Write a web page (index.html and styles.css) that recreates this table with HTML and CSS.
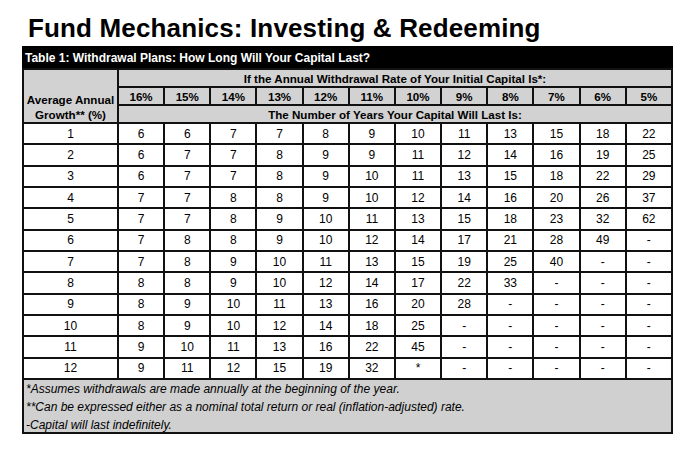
FILE: index.html
```html
<!DOCTYPE html>
<html>
<head>
<meta charset="utf-8">
<link rel="stylesheet" href="styles.css">
</head>
<body>
<h1 class="title">Fund Mechanics: Investing &amp; Redeeming</h1>
<div class="panel">
  <div class="caption">Table 1: Withdrawal Plans: How Long Will Your Capital Last?</div>
  <table class="grid">
    <thead>
      <tr class="hrow">
        <th class="growth" rowspan="3">Average Annual<br>Growth** (%)</th>
        <th class="span span-left" colspan="12">If the Annual Withdrawal Rate of Your Initial Capital Is*:</th>
      </tr>
      <tr class="hrow">
        <th class="pct">16%</th><th class="pct">15%</th><th class="pct">14%</th><th class="pct">13%</th><th class="pct">12%</th><th class="pct">11%</th><th class="pct">10%</th><th class="pct">9%</th><th class="pct">8%</th><th class="pct">7%</th><th class="pct">6%</th><th class="pct">5%</th>
      </tr>
      <tr class="hrow">
        <th class="span" colspan="12">The Number of Years Your Capital Will Last Is:</th>
      </tr>
    </thead>
    <tbody>
      <tr><td>1</td><td>6</td><td>6</td><td>7</td><td>7</td><td>8</td><td>9</td><td>10</td><td>11</td><td>13</td><td>15</td><td>18</td><td>22</td></tr>
      <tr><td>2</td><td>6</td><td>7</td><td>7</td><td>8</td><td>9</td><td>9</td><td>11</td><td>12</td><td>14</td><td>16</td><td>19</td><td>25</td></tr>
      <tr><td>3</td><td>6</td><td>7</td><td>7</td><td>8</td><td>9</td><td>10</td><td>11</td><td>13</td><td>15</td><td>18</td><td>22</td><td>29</td></tr>
      <tr><td>4</td><td>7</td><td>7</td><td>8</td><td>8</td><td>9</td><td>10</td><td>12</td><td>14</td><td>16</td><td>20</td><td>26</td><td>37</td></tr>
      <tr><td>5</td><td>7</td><td>7</td><td>8</td><td>9</td><td>10</td><td>11</td><td>13</td><td>15</td><td>18</td><td>23</td><td>32</td><td>62</td></tr>
      <tr><td>6</td><td>7</td><td>8</td><td>8</td><td>9</td><td>10</td><td>12</td><td>14</td><td>17</td><td>21</td><td>28</td><td>49</td><td>-</td></tr>
      <tr><td>7</td><td>7</td><td>8</td><td>9</td><td>10</td><td>11</td><td>13</td><td>15</td><td>19</td><td>25</td><td>40</td><td>-</td><td>-</td></tr>
      <tr><td>8</td><td>8</td><td>8</td><td>9</td><td>10</td><td>12</td><td>14</td><td>17</td><td>22</td><td>33</td><td>-</td><td>-</td><td>-</td></tr>
      <tr><td>9</td><td>8</td><td>9</td><td>10</td><td>11</td><td>13</td><td>16</td><td>20</td><td>28</td><td>-</td><td>-</td><td>-</td><td>-</td></tr>
      <tr><td>10</td><td>8</td><td>9</td><td>10</td><td>12</td><td>14</td><td>18</td><td>25</td><td>-</td><td>-</td><td>-</td><td>-</td><td>-</td></tr>
      <tr><td>11</td><td>9</td><td>10</td><td>11</td><td>13</td><td>16</td><td>22</td><td>45</td><td>-</td><td>-</td><td>-</td><td>-</td><td>-</td></tr>
      <tr><td>12</td><td>9</td><td>11</td><td>12</td><td>15</td><td>19</td><td>32</td><td>*</td><td>-</td><td>-</td><td>-</td><td>-</td><td>-</td></tr>
    </tbody>
    <tfoot>
      <tr>
        <td class="notes" colspan="13">
          <div class="note">*Assumes withdrawals are made annually at the beginning of the year.</div>
          <div class="note">**Can be expressed either as a nominal total return or real (inflation-adjusted) rate.</div>
          <div class="note note-last">-Capital will last indefinitely.</div>
        </td>
      </tr>
    </tfoot>
  </table>
</div>
</body>
</html>
```
FILE: styles.css
```css
html, body {
  margin: 0;
  padding: 0;
  background: #ffffff;
}
body {
  font-family: "Liberation Sans", Arial, sans-serif;
  color: #000;
  width: 700px;
  height: 457px;
  overflow: hidden;
}
.title {
  margin: 0;
  padding: 13px 0 0 28px;
  font-size: 26px;
  line-height: 30px;
  font-weight: bold;
  letter-spacing: 0.15px;
  height: 33px;
}
.panel {
  margin-left: 22px;
  width: 651px;
}
.caption {
  background: #000;
  color: #fff;
  font-weight: bold;
  font-size: 12px;
  height: 22px;
  line-height: 24px;
  padding-left: 3px;
}
.grid {
  width: 651px;
  border-collapse: collapse;
  table-layout: fixed;
  font-size: 12px;
}
.grid th, .grid td {
  border: 2px solid #111;
  padding: 0;
  text-align: center;
}
.grid th {
  background: #d2d2d2;
  font-weight: bold;
  font-size: 11.6px;
}
.hrow {
  height: 18px;
}
.growth {
  width: 93px;
  vertical-align: bottom;
  line-height: 15px;
  padding-bottom: 1px;
}
.span-left {
  text-align: left;
  padding-left: 123px;
}
.grid tbody tr {
  height: 21.33px;
}
.grid tbody td {
  background: #fff;
}
.grid .notes {
  background: #d0d0d0;
  text-align: left;
  font-style: italic;
  line-height: 18px;
  padding-left: 2px;
}
.note-last {
  height: 16px;
}
```
